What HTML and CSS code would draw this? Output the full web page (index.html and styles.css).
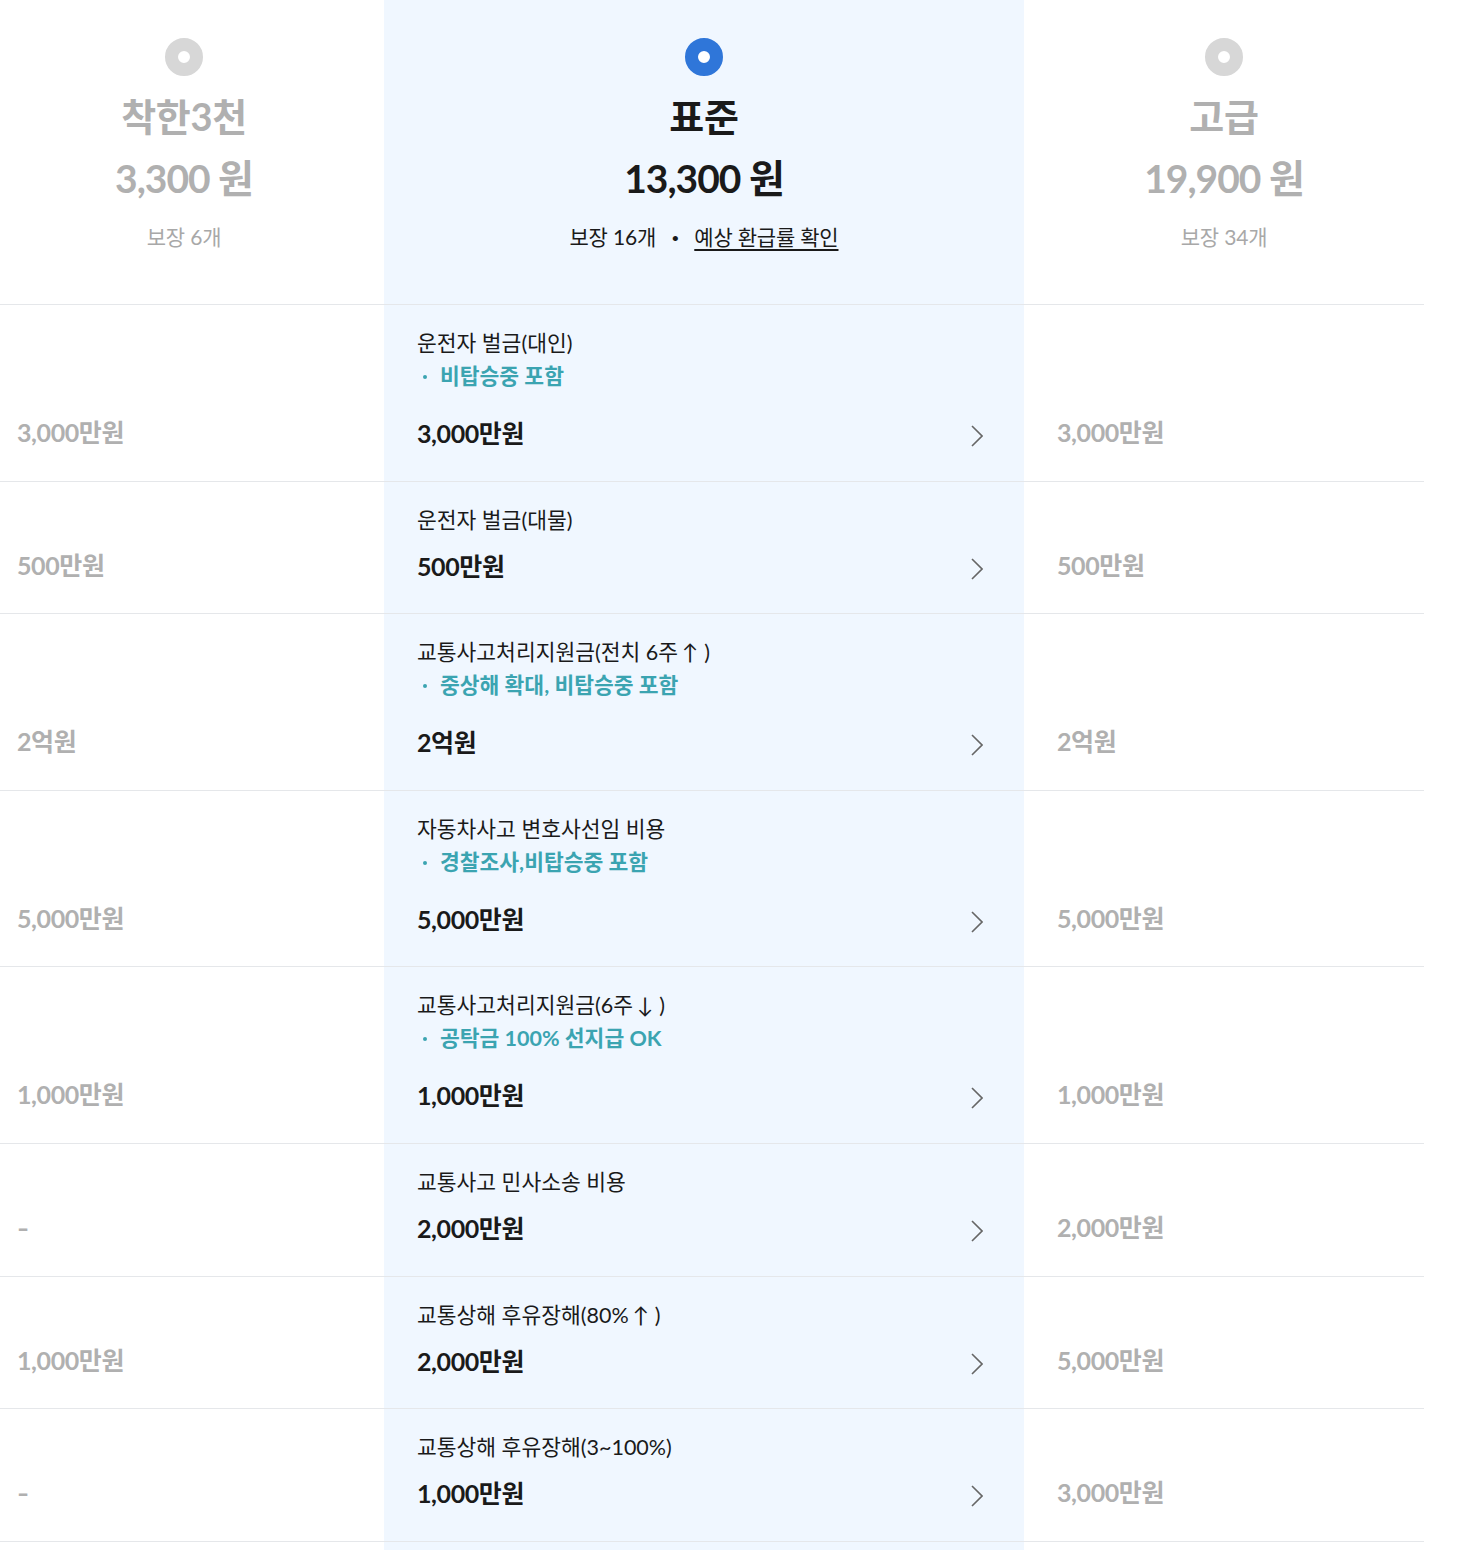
FILE: index.html
```html
<!DOCTYPE html>
<html lang="ko">
<head>
<meta charset="utf-8">
<title>플랜 비교</title>
<link rel="stylesheet" href="styles.css">
</head>
<body>
<div class="compare">
  <div class="row head">
    <div class="plan off first">
      <span class="radio"></span>
      <div class="plan-name">착한3천</div>
      <div class="plan-price">3,300 원</div>
      <div class="plan-sub">보장 6개</div>
    </div>
    <div class="plan on">
      <span class="radio"></span>
      <div class="plan-name">표준</div>
      <div class="plan-price">13,300 원</div>
      <div class="plan-sub">보장 16개 <span class="sep">•</span> <a class="link">예상 환급률 확인</a></div>
    </div>
    <div class="plan off">
      <span class="radio"></span>
      <div class="plan-name">고급</div>
      <div class="plan-price">19,900 원</div>
      <div class="plan-sub">보장 34개</div>
    </div>
  </div>

  <div class="row">
    <div class="side left">3,000만원</div>
    <div class="main">
      <div class="title">운전자 벌금(대인)</div>
      <div class="note">비탑승중 포함</div>
      <div class="value"><span>3,000만원</span><svg class="chev" width="12" height="22" viewBox="0 0 12 22"><polyline points="1,1 11,11 1,21" fill="none" stroke="#666" stroke-width="1.6"/></svg></div>
    </div>
    <div class="side right">3,000만원</div>
  </div>

  <div class="row">
    <div class="side left">500만원</div>
    <div class="main">
      <div class="title">운전자 벌금(대물)</div>
      <div class="value"><span>500만원</span><svg class="chev" width="12" height="22" viewBox="0 0 12 22"><polyline points="1,1 11,11 1,21" fill="none" stroke="#666" stroke-width="1.6"/></svg></div>
    </div>
    <div class="side right">500만원</div>
  </div>

  <div class="row">
    <div class="side left">2억원</div>
    <div class="main">
      <div class="title">교통사고처리지원금(전치 6주<span class="arr">↑</span>)</div>
      <div class="note">중상해 확대, 비탑승중 포함</div>
      <div class="value"><span>2억원</span><svg class="chev" width="12" height="22" viewBox="0 0 12 22"><polyline points="1,1 11,11 1,21" fill="none" stroke="#666" stroke-width="1.6"/></svg></div>
    </div>
    <div class="side right">2억원</div>
  </div>

  <div class="row">
    <div class="side left">5,000만원</div>
    <div class="main">
      <div class="title">자동차사고 변호사선임 비용</div>
      <div class="note">경찰조사,비탑승중 포함</div>
      <div class="value"><span>5,000만원</span><svg class="chev" width="12" height="22" viewBox="0 0 12 22"><polyline points="1,1 11,11 1,21" fill="none" stroke="#666" stroke-width="1.6"/></svg></div>
    </div>
    <div class="side right">5,000만원</div>
  </div>

  <div class="row">
    <div class="side left">1,000만원</div>
    <div class="main">
      <div class="title">교통사고처리지원금(6주<span class="arr">↓</span>)</div>
      <div class="note">공탁금 100% 선지급 OK</div>
      <div class="value"><span>1,000만원</span><svg class="chev" width="12" height="22" viewBox="0 0 12 22"><polyline points="1,1 11,11 1,21" fill="none" stroke="#666" stroke-width="1.6"/></svg></div>
    </div>
    <div class="side right">1,000만원</div>
  </div>

  <div class="row">
    <div class="side left"><span class="dash">-</span></div>
    <div class="main">
      <div class="title">교통사고 민사소송 비용</div>
      <div class="value"><span>2,000만원</span><svg class="chev" width="12" height="22" viewBox="0 0 12 22"><polyline points="1,1 11,11 1,21" fill="none" stroke="#666" stroke-width="1.6"/></svg></div>
    </div>
    <div class="side right">2,000만원</div>
  </div>

  <div class="row">
    <div class="side left">1,000만원</div>
    <div class="main">
      <div class="title">교통상해 후유장해(80%<span class="arr">↑</span>)</div>
      <div class="value"><span>2,000만원</span><svg class="chev" width="12" height="22" viewBox="0 0 12 22"><polyline points="1,1 11,11 1,21" fill="none" stroke="#666" stroke-width="1.6"/></svg></div>
    </div>
    <div class="side right">5,000만원</div>
  </div>

  <div class="row">
    <div class="side left"><span class="dash">-</span></div>
    <div class="main">
      <div class="title">교통상해 후유장해(3~100%)</div>
      <div class="value"><span>1,000만원</span><svg class="chev" width="12" height="22" viewBox="0 0 12 22"><polyline points="1,1 11,11 1,21" fill="none" stroke="#666" stroke-width="1.6"/></svg></div>
    </div>
    <div class="side right">3,000만원</div>
  </div>

  <div class="row tail">
    <div></div>
    <div class="main"></div>
    <div></div>
  </div>
</div>
</body>
</html>
```

FILE: styles.css
```css
* { box-sizing: border-box; }
html, body { margin: 0; padding: 0; background: #fff; }
body {
  font-family: Lato, "Noto Sans CJK KR", sans-serif;
  color: #1a1a1a;
}
.compare { width: 1424px; }
.row {
  display: grid;
  grid-template-columns: 384px 640px 400px;
  border-bottom: 1px solid #e5e7ea;
}
.row.tail { border-bottom: none; height: 20px; }

/* header */
.plan {
  display: flex;
  flex-direction: column;
  align-items: center;
  padding: 38px 0 51px;
}
.plan.first { padding-right: 16px; }
.plan.on { background: #f0f7ff; }
.radio {
  width: 38px;
  height: 38px;
  border-radius: 50%;
  border: 13px solid #d7d7d7;
  background: #fff;
}
.plan.on .radio { border-color: #2f76d9; }
.plan-name {
  margin-top: 18px;
  font-size: 38px;
  line-height: 44px;
  font-weight: 700;
  letter-spacing: -0.3px;
  color: #b0b0b0;
}
.plan-price {
  margin-top: 16px;
  font-size: 39px;
  line-height: 48px;
  font-weight: 700;
  letter-spacing: -1px;
  color: #b0b0b0;
}
.plan-sub {
  margin-top: 20px;
  font-size: 21px;
  line-height: 30px;
  color: #a8a8a8;
  letter-spacing: -0.2px;
}
.plan.on .plan-name,
.plan.on .plan-price,
.plan.on .plan-sub { color: #1a1a1a; }
.sep { font-size: 14px; margin: 0 10px; vertical-align: 2px; }
.link {
  text-decoration: underline;
  text-decoration-thickness: 2px;
  text-underline-offset: 4px;
  color: #1a1a1a;
}

/* body rows */
.side {
  display: flex;
  align-items: flex-end;
  padding-bottom: 30.6px;
  font-size: 25px;
  line-height: 36px;
  font-weight: 700;
  letter-spacing: -0.4px;
  color: #b0b0b0;
}
.side.left { padding-left: 17px; }
.side.right { padding-left: 33px; }
.dash { display: inline-block; transform: scaleX(1.3); transform-origin: left center; }
.main {
  background: #f0f7ff;
  padding: 22px 41px 30.6px 33px;
}
.title {
  font-size: 21.5px;
  line-height: 33px;
  letter-spacing: 0;
  color: #1a1a1a;
}
.arr { margin: 0 6px 0 4px; }
.note {
  position: relative;
  padding-left: 23px;
  padding-bottom: 11px;
  font-size: 21.5px;
  line-height: 33px;
  font-weight: 700;
  letter-spacing: 0;
  color: #3ba4b1;
}
.note::before {
  content: "";
  position: absolute;
  left: 6px;
  top: 15px;
  width: 4px;
  height: 4px;
  border-radius: 50%;
  background: #3ba4b1;
}
.value {
  margin-top: 10px;
  display: flex;
  justify-content: space-between;
  align-items: center;
  height: 36px;
  font-size: 25px;
  font-weight: 700;
  letter-spacing: -0.4px;
  color: #1a1a1a;
}
.chev { margin-top: 8px; display: block; }
```
